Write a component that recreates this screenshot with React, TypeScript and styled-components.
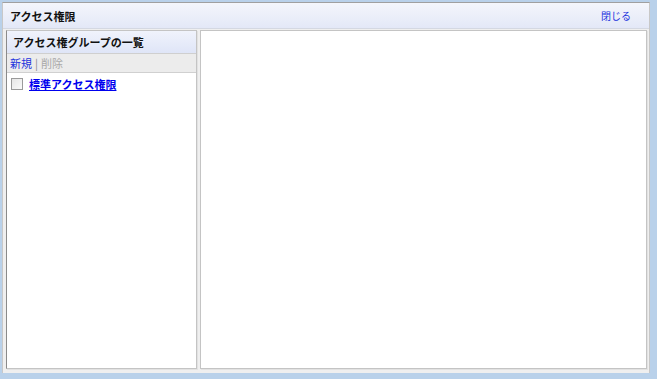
import React from 'react';
import styled, { createGlobalStyle } from 'styled-components';

const GlobalStyle = createGlobalStyle`
    html, body {
        margin: 0;
        padding: 0;
        background: #b9d1ea;
        font-family: "Noto Sans CJK JP", "Liberation Sans", sans-serif;
        font-size: 11px;
    }
`;

const Frame = styled.div`
    width: 657px;
    height: 379px;
    box-sizing: border-box;
    padding: 2px 7px 6px 2px;
    background: #b9d1ea;
`;

const Window = styled.div`
    height: 100%;
    display: flex;
    flex-direction: column;
    box-sizing: border-box;
    border-top: 1px solid #a0a0a0;
    border-left: 1px solid #c8c8c8;
    border-right: 1px solid #c8c8c8;
    background: #efefef;
`;

const TitleBar = styled.div`
    height: 25px;
    flex: none;
    display: flex;
    align-items: center;
    justify-content: space-between;
    padding: 0 18px 0 7px;
    background: linear-gradient(to bottom, #f4f6fc 0%, #e3e8f7 100%);
    border-bottom: 1px solid #d4d8e2;
`;

const Title = styled.span`
    font-weight: bold;
    color: #111;
    font-size: 11px;
`;

const CloseLink = styled.a`
    color: #2233dd;
    text-decoration: none;
    font-size: 10px;
    cursor: pointer;
`;

const Body = styled.div`
    flex: 1;
    display: flex;
    gap: 3px;
    padding: 1px 2px 4px 3px;
    min-height: 0;
`;

const Panel = styled.div<{ $width?: number }>`
    ${(p) => (p.$width ? `width: ${p.$width}px; flex: none;` : 'flex: 1;')}
    display: flex;
    flex-direction: column;
    background: #fff;
    border: 1px solid #c4c4c4;
    border-left-color: ${(p) => (p.$width ? '#8a8a8a' : '#c4c4c4')};
    box-shadow: 1px 1px 0 #e2e2e2;
`;

const PanelHeader = styled.div`
    height: 22px;
    display: flex;
    align-items: center;
    padding-left: 6px;
    font-weight: bold;
    color: #111;
    background: linear-gradient(to bottom, #f0f3fc 0%, #dfe5f7 100%);
    border-bottom: 1px solid #cfcfcf;
`;

const Toolbar = styled.div`
    height: 18px;
    display: flex;
    align-items: center;
    gap: 3px;
    padding-left: 3px;
    background: #ececec;
    border-bottom: 1px solid #d0d0d0;
`;

const ToolLink = styled.a<{ $disabled?: boolean }>`
    color: ${(p) => (p.$disabled ? '#a8a8a8' : '#2233dd')};
    text-decoration: none;
`;

const Sep = styled.span`
    color: #888;
`;

const Row = styled.div`
    display: flex;
    align-items: center;
    gap: 6px;
    padding: 3px 0 0 4px;
`;

const Check = styled.span`
    width: 10px;
    height: 10px;
    border: 1px solid #9a9a9a;
    background: linear-gradient(to bottom right, #e6e6e6, #fafafa);
`;

const GroupLink = styled.a`
    color: #0000ee;
    font-weight: bold;
    text-decoration: underline;
`;

export default function App() {
    return (
        <>
            <GlobalStyle />
            <Frame>
                <Window>
                    <TitleBar>
                        <Title>アクセス権限</Title>
                        <CloseLink>閉じる</CloseLink>
                    </TitleBar>
                    <Body>
                        <Panel $width={189}>
                            <PanelHeader>アクセス権グループの一覧</PanelHeader>
                            <Toolbar>
                                <ToolLink>新規</ToolLink>
                                <Sep>|</Sep>
                                <ToolLink $disabled>削除</ToolLink>
                            </Toolbar>
                            <Row>
                                <Check />
                                <GroupLink>標準アクセス権限</GroupLink>
                            </Row>
                        </Panel>
                        <Panel />
                    </Body>
                </Window>
            </Frame>
        </>
    );
}
